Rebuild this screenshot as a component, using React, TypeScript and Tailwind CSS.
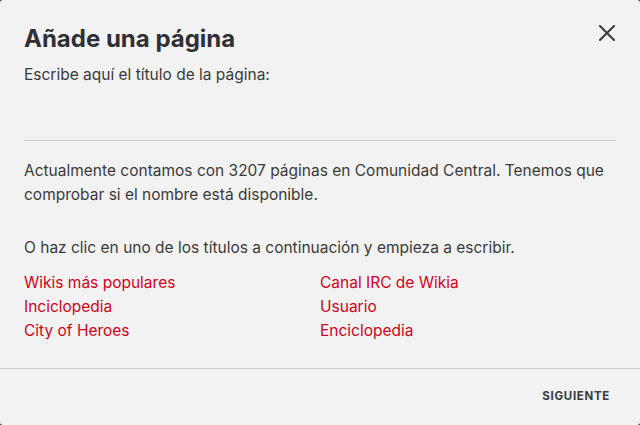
const leftLinks = ["Wikis más populares", "Inciclopedia", "City of Heroes"];
const rightLinks = ["Canal IRC de Wikia", "Usuario", "Enciclopedia"];

function CloseIcon() {
  return (
    <svg width="16" height="16" viewBox="0 0 16 16" fill="none" stroke="currentColor" strokeWidth="2" strokeLinecap="square">
      <path d="M1 1L15 15M15 1L1 15" />
    </svg>
  );
}

export default function App() {
  return (
    <div className="h-[425px] w-[640px] bg-[#3a3a3a]" style={{ fontFamily: "Inter, 'Noto Sans', sans-serif" }}>
      <div className="flex h-full w-full flex-col rounded-[3px] bg-[#f2f2f2] text-[#3a3a3a]">
        <div className="flex items-start justify-between pl-6 pr-[25px] pt-6">
          <h2 className="text-[24px] font-bold leading-[30px] text-[#2f2f35]">Añade una página</h2>
          <button className="mt-[1px] text-[#3a3a3a]" aria-label="Cerrar">
            <CloseIcon />
          </button>
        </div>

        <div className="px-6">
          <p className="mt-[9px] text-[15.5px] leading-6">Escribe aquí el título de la página:</p>
          <input
            className="block h-[54px] w-full border-b border-[#cccccc] bg-transparent text-[15px] outline-none"
            type="text"
          />
          <p className="mt-[18px] text-[15.5px] leading-6">
            Actualmente contamos con 3207 páginas en Comunidad Central. Tenemos que comprobar si el nombre está disponible.
          </p>
          <p className="mt-[29px] text-[15.5px] leading-6">O haz clic en uno de los títulos a continuación y empieza a escribir.</p>
          <div className="mt-[11px] grid grid-cols-2 text-[15.5px] leading-6 text-[#d0021b]">
            <ul>
              {leftLinks.map((l) => (
                <li key={l}>
                  <a href="#">{l}</a>
                </li>
              ))}
            </ul>
            <ul>
              {rightLinks.map((l) => (
                <li key={l}>
                  <a href="#">{l}</a>
                </li>
              ))}
            </ul>
          </div>
        </div>

        <div className="mt-auto flex h-[57px] items-center justify-end border-t border-[#cccccc] px-[30px]">
          <button className="text-[11.5px] font-bold tracking-[0.06em] text-[#3a3a3a] uppercase">Siguiente</button>
        </div>
      </div>
    </div>
  );
}
